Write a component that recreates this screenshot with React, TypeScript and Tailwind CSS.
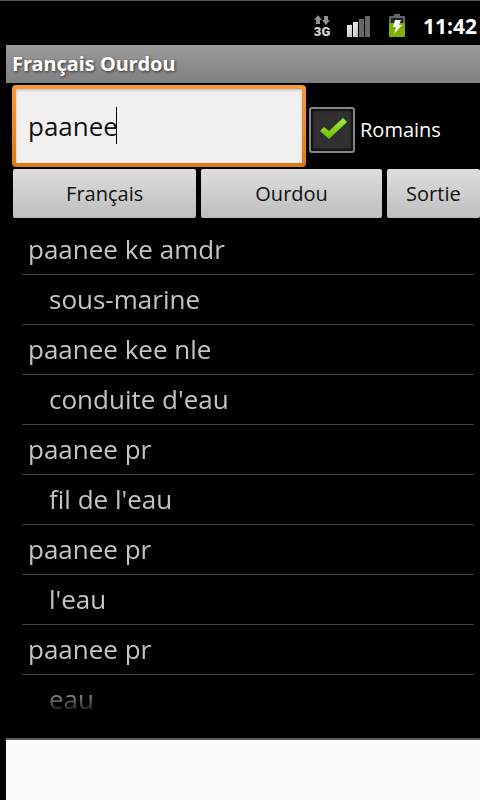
import { useState } from 'react';

const RESULTS = [
    { roman: 'paanee ke amdr', french: 'sous-marine' },
    { roman: 'paanee kee nle', french: "conduite d'eau" },
    { roman: 'paanee pr', french: "fil de l'eau" },
    { roman: 'paanee pr', french: "l'eau" },
    { roman: 'paanee pr', french: 'eau' },
];

function NetworkIcon() {
    return (
        <div className="w-4 flex flex-col items-center">
            <svg width="16" height="10" viewBox="0 0 16 10" fill="#8f8f8f" aria-hidden="true">
                <path d="M4 0L8 5H6v4H2V5H0z" />
                <path d="M12 10L8 5h2V1h4v4h2z" />
            </svg>
            <span className="font-['Roboto',sans-serif] text-[13px] leading-[13px] font-black text-[#d6d6d6]">3G</span>
        </div>
    );
}

function SignalIcon() {
    return (
        <svg width="24" height="22" viewBox="0 0 24 22" aria-hidden="true">
            <defs>
                <linearGradient id="bar" x1="0" y1="0" x2="1" y2="1">
                    <stop offset="0" stopColor="#f4f4f4" />
                    <stop offset="1" stopColor="#bcbcbc" />
                </linearGradient>
            </defs>
            <rect x="0" y="10" width="5" height="12" fill="url(#bar)" />
            <rect x="6" y="7" width="5" height="15" fill="url(#bar)" />
            <rect x="12" y="4" width="5" height="18" fill="#666" />
            <rect x="18" y="1" width="5" height="21" fill="#666" />
        </svg>
    );
}

function BatteryIcon() {
    return (
        <svg width="18" height="24" viewBox="0 0 18 24" aria-hidden="true">
            <path d="M6 0h6v2h4a1 1 0 0 1 1 1v7H1V3a1 1 0 0 1 1-1h4z" fill="#666" />
            <rect x="3" y="4" width="12" height="5" fill="#222" />
            <path d="M1 9h16v13a1 1 0 0 1-1 1H2a1 1 0 0 1-1-1z" fill="#7fae04" />
            <path d="M7 6h6l-2 5h3L6 20l2-7H5z" fill="#fff" />
        </svg>
    );
}

export default function App() {
    const [query, setQuery] = useState('paanee');
    const [roman, setRoman] = useState(true);

    const button = "h-[49px] rounded-[2px] bg-linear-to-b from-[#dedede] to-[#bebebe] text-[20px] text-[#111]";

    return (
        <div className="min-h-screen flex flex-col bg-black border-t border-[#555] pl-[6px] font-['Open_Sans','Noto_Sans',sans-serif]">
            {/* Status bar */}
            <div className="h-11 flex items-center justify-end pr-[3px] pt-[6px]">
                <div className="flex items-center gap-[17px]">
                    <NetworkIcon />
                    <SignalIcon />
                    <BatteryIcon />
                    <time className="font-['Noto_Sans',sans-serif] text-[21px] leading-6 font-bold text-white">11:42</time>
                </div>
            </div>

            <h1 className="h-[38px] px-[6px] bg-linear-to-b from-[#9b9b9b] to-[#808080] font-['Noto_Sans',sans-serif] text-[20px] leading-[37px] font-bold text-white [text-shadow:1px_1px_3px_#333]">
                Français Ourdou
            </h1>

            <main>
                <div className="flex pt-[2px] pl-[6px] gap-[3px]">
                    <div className="relative flex-1 min-w-0 rounded-[4px] p-1 bg-linear-to-b from-[#f79a3c] to-[#dd7a12]">
                        <input
                            type="text"
                            aria-label="Mot"
                            value={query}
                            onChange={e => setQuery(e.target.value)}
                            className="block w-full h-[74px] px-3 bg-[#f0f0f0] shadow-[inset_0_1px_3px_#bbb] text-[26px] text-[#111] outline-none caret-black"
                        />
                        {/* Text cursor */}
                        <span className="absolute left-[104px] top-[22px] w-px h-[37px] bg-black" />
                    </div>
                    <label className="w-[171px] flex items-center gap-[5px] pt-[8px] text-[20px] text-white">
                        <span className="relative w-[46px] h-[46px]">
                            <input
                                type="checkbox"
                                checked={roman}
                                onChange={e => setRoman(e.target.checked)}
                                className="block appearance-none w-full h-full rounded-[3px] border-2 border-[#858585] bg-[#303030] shadow-[inset_0_0_2px_2px_#111]"
                            />
                            {roman && (
                                <svg className="absolute inset-0 pointer-events-none" width="46" height="46" viewBox="0 0 46 46" aria-hidden="true">
                                    <defs>
                                        <linearGradient id="tick" x1="0" y1="0" x2="0" y2="1">
                                            <stop offset="0" stopColor="#a6ee35" />
                                            <stop offset="1" stopColor="#69bd0c" />
                                        </linearGradient>
                                    </defs>
                                    <path d="M11 24l4-4 5 4L34 11l4 4-18 17z" fill="url(#tick)" />
                                </svg>
                            )}
                        </span>
                        Romains
                    </label>
                </div>

                <div className="grid grid-cols-[183fr_180fr_93fr] gap-x-[5px] pt-[2px] pl-[7px]">
                    <button type="button" className={button}>Français</button>
                    <button type="button" className={button}>Ourdou</button>
                    <button type="button" className={button}>Sortie</button>
                </div>

                {/* Word list, fading out at the bottom */}
                <ul className="mt-[7px] ml-4 mr-[6px] text-[26px] leading-[49px] text-[#c4c4c4] [mask-image:linear-gradient(to_bottom,black_460px,transparent_491px)]">
                    {RESULTS.map((item, i) => (
                        <li key={i}>
                            <p className="h-[50px] pl-[6px] border-b border-[#404040]">{item.roman}</p>
                            <p className="h-[50px] pl-[27px] border-b border-[#404040]">{item.french}</p>
                        </li>
                    ))}
                </ul>
            </main>

            <footer className="mt-[13px] flex-1 border-t-2 border-[#606060] bg-[#fafafa]" />
        </div>
    );
}
